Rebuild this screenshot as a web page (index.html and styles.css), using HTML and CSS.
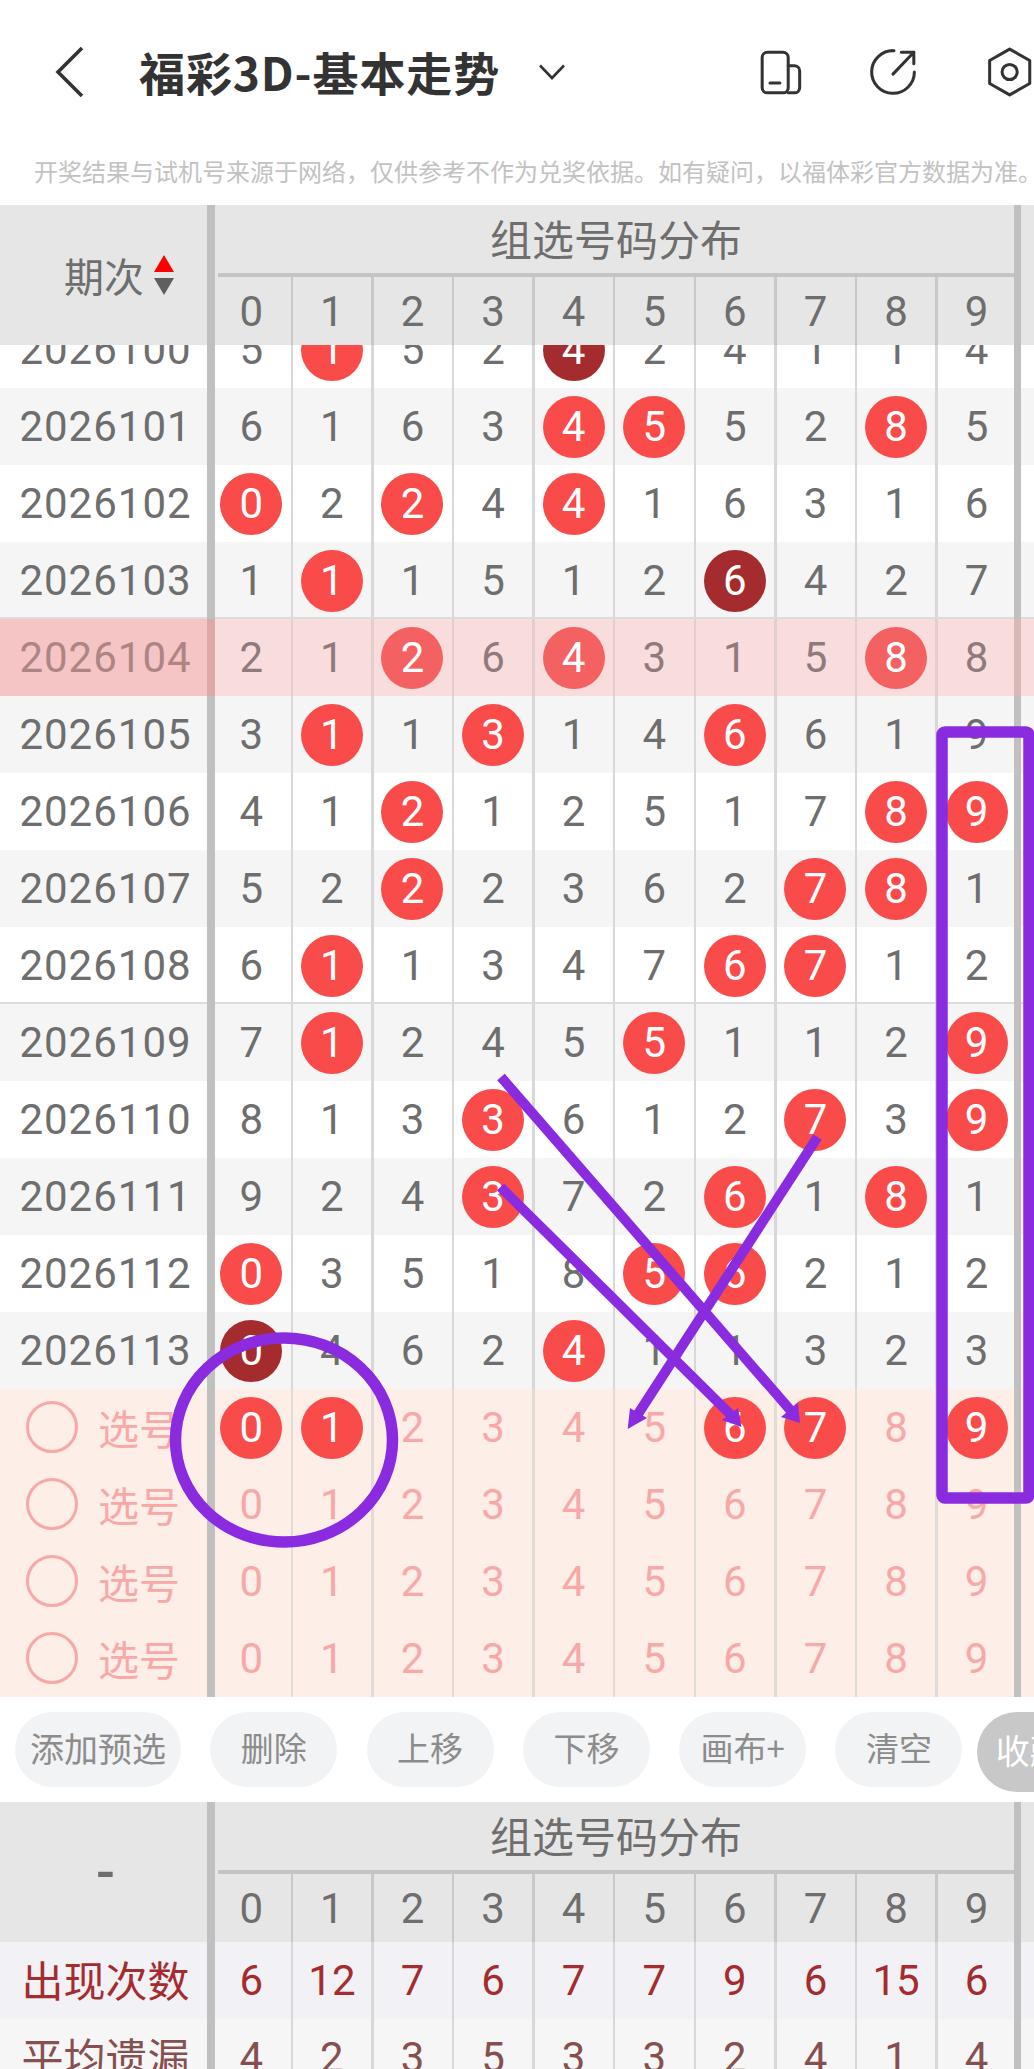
FILE: index.html
```html
<!DOCTYPE html>
<html lang="zh-CN">
<head>
<meta charset="utf-8">
<title>福彩3D-基本走势</title>
<link rel="stylesheet" href="styles.css">
</head>
<body>
<header class="nav">
  <svg class="back" viewBox="0 0 34 54"><path d="M29 3 5 27l24 24"/></svg>
  <h1 class="title">福彩3D-基本走势</h1>
  <svg class="caret" viewBox="0 0 30 18"><path d="M3 2.500 15 15 27 2.500"/></svg>
  <svg class="ico ico-a" viewBox="0 0 48 48"><rect x="4" y="5" width="25" height="39" rx="5"/><path d="M29 18h6a5 5 0 0 1 5 5v16a5 5 0 0 1-5 5h-6M11.500 34.500h9.500"/></svg>
  <svg class="ico ico-b" viewBox="0 0 48 48"><path d="M25 3.500A20.500 20.500 0 1 0 44.500 24M24 26 44 5M32 5h12v11"/></svg>
  <svg class="ico ico-c" viewBox="0 0 48 48"><path d="M22.700 2 42 13v22L22.700 46 3.500 35V13z"/><circle cx="22.700" cy="24" r="7.300"/></svg>
</header>
<p class="note">开奖结果与试机号来源于网络，仅供参考不作为兑奖依据。如有疑问，以福体彩官方数据为准。</p>

<main class="board">
  <div class="hdr">
    <div class="h-left"><span>期次</span><span class="sort"><i class="up"></i><i class="down"></i></span></div>
    <div class="h-title">组选号码分布</div>
    <div class="c h">0</div><div class="c h">1</div><div class="c h">2</div><div class="c h">3</div><div class="c h">4</div><div class="c h">5</div><div class="c h">6</div><div class="c h">7</div><div class="c h">8</div><div class="c h">9</div>
  </div>
  <div class="rows">
    <div class="row w"><div class="p">2026100</div><div class="c">5</div><div class="c"><b>1</b></div><div class="c">5</div><div class="c">2</div><div class="c"><b class="d">4</b></div><div class="c">2</div><div class="c">4</div><div class="c">1</div><div class="c">1</div><div class="c">4</div></div>
    <div class="row g"><div class="p">2026101</div><div class="c">6</div><div class="c">1</div><div class="c">6</div><div class="c">3</div><div class="c"><b>4</b></div><div class="c"><b>5</b></div><div class="c">5</div><div class="c">2</div><div class="c"><b>8</b></div><div class="c">5</div></div>
    <div class="row w"><div class="p">2026102</div><div class="c"><b>0</b></div><div class="c">2</div><div class="c"><b>2</b></div><div class="c">4</div><div class="c"><b>4</b></div><div class="c">1</div><div class="c">6</div><div class="c">3</div><div class="c">1</div><div class="c">6</div></div>
    <div class="row g"><div class="p">2026103</div><div class="c">1</div><div class="c"><b>1</b></div><div class="c">1</div><div class="c">5</div><div class="c">1</div><div class="c">2</div><div class="c"><b class="d">6</b></div><div class="c">4</div><div class="c">2</div><div class="c">7</div></div>
    <div class="row hl sep"><div class="p">2026104</div><div class="c">2</div><div class="c">1</div><div class="c"><b>2</b></div><div class="c">6</div><div class="c"><b>4</b></div><div class="c">3</div><div class="c">1</div><div class="c">5</div><div class="c"><b>8</b></div><div class="c">8</div></div>
    <div class="row g"><div class="p">2026105</div><div class="c">3</div><div class="c"><b>1</b></div><div class="c">1</div><div class="c"><b>3</b></div><div class="c">1</div><div class="c">4</div><div class="c"><b>6</b></div><div class="c">6</div><div class="c">1</div><div class="c">9</div></div>
    <div class="row w"><div class="p">2026106</div><div class="c">4</div><div class="c">1</div><div class="c"><b>2</b></div><div class="c">1</div><div class="c">2</div><div class="c">5</div><div class="c">1</div><div class="c">7</div><div class="c"><b>8</b></div><div class="c"><b>9</b></div></div>
    <div class="row g"><div class="p">2026107</div><div class="c">5</div><div class="c">2</div><div class="c"><b>2</b></div><div class="c">2</div><div class="c">3</div><div class="c">6</div><div class="c">2</div><div class="c"><b>7</b></div><div class="c"><b>8</b></div><div class="c">1</div></div>
    <div class="row w"><div class="p">2026108</div><div class="c">6</div><div class="c"><b>1</b></div><div class="c">1</div><div class="c">3</div><div class="c">4</div><div class="c">7</div><div class="c"><b>6</b></div><div class="c"><b>7</b></div><div class="c">1</div><div class="c">2</div></div>
    <div class="row g sep"><div class="p">2026109</div><div class="c">7</div><div class="c"><b>1</b></div><div class="c">2</div><div class="c">4</div><div class="c">5</div><div class="c"><b>5</b></div><div class="c">1</div><div class="c">1</div><div class="c">2</div><div class="c"><b>9</b></div></div>
    <div class="row w"><div class="p">2026110</div><div class="c">8</div><div class="c">1</div><div class="c">3</div><div class="c"><b>3</b></div><div class="c">6</div><div class="c">1</div><div class="c">2</div><div class="c"><b>7</b></div><div class="c">3</div><div class="c"><b>9</b></div></div>
    <div class="row g"><div class="p">2026111</div><div class="c">9</div><div class="c">2</div><div class="c">4</div><div class="c"><b>3</b></div><div class="c">7</div><div class="c">2</div><div class="c"><b>6</b></div><div class="c">1</div><div class="c"><b>8</b></div><div class="c">1</div></div>
    <div class="row w"><div class="p">2026112</div><div class="c"><b>0</b></div><div class="c">3</div><div class="c">5</div><div class="c">1</div><div class="c">8</div><div class="c"><b>5</b></div><div class="c"><b>6</b></div><div class="c">2</div><div class="c">1</div><div class="c">2</div></div>
    <div class="row g"><div class="p">2026113</div><div class="c"><b class="d">0</b></div><div class="c">4</div><div class="c">6</div><div class="c">2</div><div class="c"><b>4</b></div><div class="c">1</div><div class="c">1</div><div class="c">3</div><div class="c">2</div><div class="c">3</div></div>
    <div class="row pre"><div class="pick"><i class="radio"></i>选号</div><div class="c"><b>0</b></div><div class="c"><b>1</b></div><div class="c">2</div><div class="c">3</div><div class="c">4</div><div class="c">5</div><div class="c"><b>6</b></div><div class="c"><b>7</b></div><div class="c">8</div><div class="c"><b>9</b></div></div>
    <div class="row pre"><div class="pick"><i class="radio"></i>选号</div><div class="c">0</div><div class="c">1</div><div class="c">2</div><div class="c">3</div><div class="c">4</div><div class="c">5</div><div class="c">6</div><div class="c">7</div><div class="c">8</div><div class="c">9</div></div>
    <div class="row pre"><div class="pick"><i class="radio"></i>选号</div><div class="c">0</div><div class="c">1</div><div class="c">2</div><div class="c">3</div><div class="c">4</div><div class="c">5</div><div class="c">6</div><div class="c">7</div><div class="c">8</div><div class="c">9</div></div>
    <div class="row pre"><div class="pick"><i class="radio"></i>选号</div><div class="c">0</div><div class="c">1</div><div class="c">2</div><div class="c">3</div><div class="c">4</div><div class="c">5</div><div class="c">6</div><div class="c">7</div><div class="c">8</div><div class="c">9</div></div>
  </div>
</main>

<nav class="tools">
  <span class="pill wide">添加预选</span>
  <span class="pill">删除</span>
  <span class="pill">上移</span>
  <span class="pill">下移</span>
  <span class="pill">画布+</span>
  <span class="pill">清空</span>
  <span class="collapse">收藏</span>
</nav>

<section class="stats">
  <div class="hdr static">
    <div class="h-left dash">-</div>
    <div class="h-title">组选号码分布</div>
    <div class="c h">0</div><div class="c h">1</div><div class="c h">2</div><div class="c h">3</div><div class="c h">4</div><div class="c h">5</div><div class="c h">6</div><div class="c h">7</div><div class="c h">8</div><div class="c h">9</div>
  </div>
  <div class="row st1"><div class="lab">出现次数</div><div class="c">6</div><div class="c">12</div><div class="c">7</div><div class="c">6</div><div class="c">7</div><div class="c">7</div><div class="c">9</div><div class="c">6</div><div class="c">15</div><div class="c">6</div></div>
  <div class="row st2"><div class="lab">平均遗漏</div><div class="c">4</div><div class="c">2</div><div class="c">3</div><div class="c">5</div><div class="c">3</div><div class="c">3</div><div class="c">2</div><div class="c">4</div><div class="c">1</div><div class="c">4</div></div>
</section>

<svg class="ink" viewBox="0 0 1034 2069">
  <ellipse class="ink-s" cx="284" cy="1440" rx="108.500" ry="102"/>
  <rect class="ink-s" x="942" y="732" width="87" height="766" rx="3"/>
  <path class="ink-s thin" d="M501 1077 792 1412M500.500 1187 733 1417M817.500 1137 638 1414"/>
  <path class="ink-f" d="M800 1423 781 1417 798 1403zM741.500 1427 722 1420 738 1408zM627.700 1429 630 1408 647 1418z"/>
</svg>
</body>
</html>
```
FILE: styles.css
```css
* { box-sizing: border-box; margin: 0; padding: 0; }
html, body { background: #fff; }
body {
  position: relative;
  width: 1034px;
  height: 2069px;
  overflow: hidden;
  font-family: Roboto, "Noto Sans CJK SC", sans-serif;
  color: #6e6e6e;
}
i { display: block; font-style: normal; }

/* nav */
.nav { display: flex; align-items: center; height: 144px; padding-left: 53px; color: #333; }
.nav svg { fill: none; stroke: #333; flex: none; }
.back { width: 34px; height: 54px; stroke-width: 3.6; }
.title { margin-left: 52px; width: 362px; padding-bottom: 3px; font-size: 46px; font-weight: 700; white-space: nowrap; font-family: "Noto Sans CJK SC", sans-serif; color: #333; letter-spacing: .9px; }
.caret { width: 30px; height: 18px; margin-left: 37px; stroke-width: 2.6; }
.ico { width: 50px; height: 50px; stroke-width: 2.900; stroke-linejoin: round; stroke-linecap: round; }
.ico-a { margin-left: 191px; }
.ico-b { margin-left: 60px; }
.ico-c { margin-left: 68px; }

.note { height: 61px; padding-left: 34px; font-size: 24px; line-height: 54px; color: #c2c2c2; white-space: nowrap; font-family: "Noto Sans CJK SC", sans-serif; }

/* shared column grid */
.hdr, .row { display: grid; grid-template-columns: 211px repeat(10, 80.6px) 1fr; }
.row { position: relative; height: 77px; }
.hdr::before, .hdr::after, .row::before, .row::after {
  content: ""; position: absolute; top: 0; bottom: 0; width: 7px; background: #c0c0c0; z-index: 1;
}
.hdr::before, .row::before { left: 207px; width: 8px; }
.hdr::after, .row::after { left: 1014px; }

.c { position: relative; display: flex; align-items: center; justify-content: center; font-size: 42px; }
.c::before { content: ""; position: absolute; left: -1px; top: 0; bottom: 0; width: 2.400px; background: #d8d8d8; }
.c b { display: flex; align-items: center; justify-content: center; width: 62px; height: 62px; border-radius: 50%; background: #fa4b4b; color: #fff; font-weight: 400; position: relative; }
.c b.d { background: #a52c2e; }

/* header */
.board { position: relative; }
.hdr { position: absolute; top: 0; left: 0; width: 1034px; height: 140px; grid-template-rows: 72px 68px; background: #e6e6e6; z-index: 2; }
.hdr.static { position: relative; }
.h-left { grid-row: 1 / span 2; display: flex; align-items: center; gap: 10px; padding-left: 64px; font-size: 40px; font-family: "Noto Sans CJK SC", sans-serif; }
.h-title { grid-column: 2 / 12; margin: 0 3px 0 7px; padding-bottom: 4px; border-bottom: 4px solid #c4c4c4; display: flex; align-items: center; justify-content: center; font-size: 42px; font-family: "Noto Sans CJK SC", sans-serif; }
.c.h { grid-row: 2; }
.c.h::before { background: #c8c8c8; }
.sort { display: flex; flex-direction: column; gap: 6px; }
.up { width: 0; height: 0; border: solid transparent; border-width: 0 10px 17px; border-bottom-color: #f00; }
.down { width: 0; height: 0; border: solid transparent; border-width: 17px 10px 0; border-top-color: #5f5f5f; }
.dash { justify-content: center; padding-left: 0; font-size: 56px; font-family: Roboto, sans-serif; font-weight: 500; }

/* rows */
.rows { padding-top: 106px; }
.p { display: flex; align-items: center; justify-content: center; font-size: 42px; letter-spacing: 1px; }
.w { background: #fff; }
.g { background: #f5f5f5; }
.sep { box-shadow: 0 -2px 0 #dcdcdc; }
.hl { background: #f9dcdc; color: #8f7b7b; }
.hl .p { background: #f5c5c5; color: #ad8585; }
.hl::before { background: #dda8a8; }
.hl .c::before { background: #e3cdcd; }
.hl .c b { background: #f46162; }
.hl::after { background: #d9b8b8; }

.pre { background: #feeee8; color: #f9a8a8; }
.pre .c::before { background: #e2dcd9; }
.pick { display: flex; align-items: center; gap: 20px; padding-left: 26px; padding-bottom: 1px; font-size: 41px; font-family: "Noto Sans CJK SC", sans-serif; }
.radio { flex: none; width: 52px; height: 52px; border: 3px solid #f9a8a8; border-radius: 50%; }

/* tools */
.tools { display: flex; align-items: flex-start; gap: 29.300px; height: 105px; padding: 15px 0 0 15px; overflow: hidden; font-family: "Noto Sans CJK SC", sans-serif; }
.pill { flex: none; display: flex; align-items: center; justify-content: center; width: 127px; height: 75px; padding-bottom: 5px; border-radius: 38px; background: #f2f3f5; color: #8c8c8c; font-size: 33px; }
.pill.wide { width: 166px; font-size: 34px; }
.collapse { flex: none; width: 130px; height: 80px; margin-left: -15px; padding-left: 19px; border-radius: 40px; background: #c8c8c8; color: #fff; font-size: 34px; line-height: 76px; white-space: nowrap; }

/* stats */
.lab { display: flex; align-items: center; justify-content: center; padding-bottom: 4px; font-size: 42px; font-family: "Noto Sans CJK SC", sans-serif; }
.st1 { background: #f1f1f6; color: #a52c2e; }
.st2 { background: #f6f6f6; color: #875050; }

/* hand-drawn annotations over the page */
.ink { position: absolute; top: 0; left: 0; width: 1034px; height: 2069px; z-index: 5; }
.ink-s { fill: none; stroke: #8a2be0; stroke-width: 11.500; }
.ink-s.thin { stroke-width: 10; }
.ink-f { fill: #8a2be0; }
```
